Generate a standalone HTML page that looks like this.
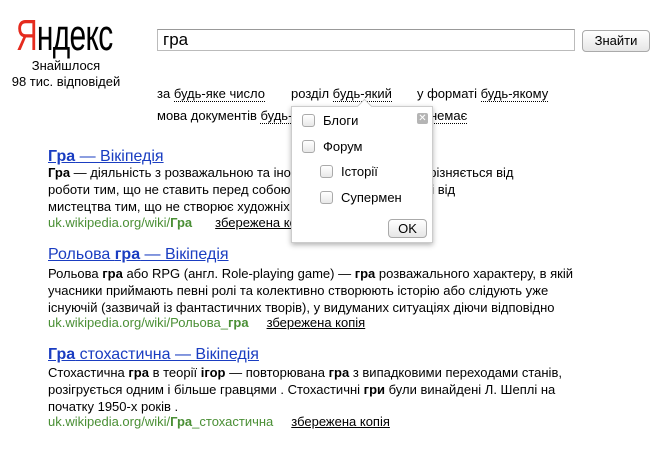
<!DOCTYPE html>
<html><head><meta charset="utf-8"><style>
body{margin:0;width:660px;height:460px;background:#fff;font-family:"Liberation Sans",Arial,sans-serif;font-size:13px;color:#000;position:relative;overflow:hidden}
.a{position:absolute;white-space:nowrap}
.logo{left:16px;top:13px;font-size:44px;letter-spacing:-1px;transform:scaleX(0.68);transform-origin:left top;line-height:46px}
.logo span{color:#e52b1e}
.dl{border-bottom:1px dotted #000}
.t{font-size:16px;color:#1a3dc1;text-decoration:underline}
.u{color:#4a8f35}
.c{text-decoration:underline}
.r{line-height:17px}
.cb{display:inline-block;width:11px;height:11px;border:1px solid #aaa;border-radius:3px;background:linear-gradient(#fff,#e8e8e8);vertical-align:-2px;margin-right:8px}
</style></head><body>
<div class="a logo"><span>Я</span>ндекс</div>
<div class="a" style="left:0;width:132px;top:58px;text-align:center;line-height:16px">Знайшлося<br>98 тис. відповідей</div>
<div class="a" style="left:157px;top:29px;width:418px;height:22px;border:1px solid #bbb;border-top-color:#999;box-sizing:border-box"></div>
<div class="a" style="left:163px;top:30px;font-size:17px;line-height:20px">гра</div>
<div class="a" style="left:582px;top:30px;width:68px;height:22px;border:1px solid #aaa;border-radius:4px;background:linear-gradient(#fff,#e6e6e6);box-sizing:border-box;text-align:center;line-height:20px">Знайти</div>
<div class="a" style="left:157px;top:86px">за <span class="dl">будь-яке число</span></div>
<div class="a" style="left:291px;top:86px">розділ <span class="dl">будь-який</span></div>
<div class="a" style="left:417px;top:86px">у форматі <span class="dl">будь-якому</span></div>
<div class="a" style="left:157px;top:108px">мова документів <span class="dl">будь-яка</span></div>
<div class="a" style="left:430px;top:108px"><span class="dl">немає</span></div>

<div class="a r" style="left:48px;top:148px"><span class="t"><b>Гра</b> — Вікіпедія</span></div>
<div class="a r" style="left:48px;top:164px"><b>Гра</b> — діяльність з розважальною та іноземною метою. <b>Гра</b> відрізняється від<br>роботи тим, що не ставить перед собою цілей як футбол мети, і від<br>мистецтва тим, що не створює художніх творів.</div>
<div class="a" style="left:48px;top:215px"><span class="u">uk.wikipedia.org/wiki/<b>Гра</b></span><span class="c" style="margin-left:23px">збережена копія</span></div>

<div class="a r" style="left:48px;top:246px"><span class="t">Рольова <b>гра</b> — Вікіпедія</span></div>
<div class="a r" style="left:48px;top:265px">Рольова <b>гра</b> або RPG (англ. Role-playing game) — <b>гра</b> розважального характеру, в якій<br>учасники приймають певні ролі та колективно створюють історію або слідують уже<br>існуючій (зазвичай із фантастичних творів), у видуманих ситуаціях діючи відповідно</div>
<div class="a" style="left:48px;top:315px"><span class="u">uk.wikipedia.org/wiki/Рольова_<b>гра</b></span><span class="c" style="margin-left:18px">збережена копія</span></div>

<div class="a r" style="left:48px;top:346px"><span class="t"><b>Гра</b> стохастична — Вікіпедія</span></div>
<div class="a r" style="left:48px;top:364px">Стохастична <b>гра</b> в теорії <b>ігор</b> — повторювана <b>гра</b> з випадковими переходами станів,<br>розігрується одним і більше гравцями . Стохастичні <b>гри</b> були винайдені Л. Шеплі на<br>початку 1950-х років .</div>
<div class="a" style="left:48px;top:414px"><span class="u">uk.wikipedia.org/wiki/<b>Гра</b>_стохастична</span><span class="c" style="margin-left:18px">збережена копія</span></div>

<div class="a" style="left:291px;top:106px;width:142px;height:137px;background:#fff;border:1px solid #ccc;box-sizing:border-box;box-shadow:0 2px 5px rgba(0,0,0,.3)"></div>
<div class="a" style="left:359px;top:101px;width:10px;height:10px;background:#fff;border-left:1px solid #ccc;border-top:1px solid #ccc;transform:rotate(45deg)"></div>
<div class="a" style="left:417px;top:113px;width:11px;height:11px;background:#b5b5b5;border-radius:2px;color:#fff;font-size:10px;line-height:11px;text-align:center">✕</div>
<div class="a" style="left:302px;top:113px"><span class="cb"></span>Блоги</div>
<div class="a" style="left:302px;top:139px"><span class="cb"></span>Форум</div>
<div class="a" style="left:320px;top:164px"><span class="cb"></span>Історії</div>
<div class="a" style="left:320px;top:190px"><span class="cb"></span>Супермен</div>
<div class="a" style="left:388px;top:219px;width:39px;height:19px;border:1px solid #aaa;border-radius:4px;background:linear-gradient(#fff,#e6e6e6);box-sizing:border-box;text-align:center;line-height:17px">OK</div>
</body></html>
